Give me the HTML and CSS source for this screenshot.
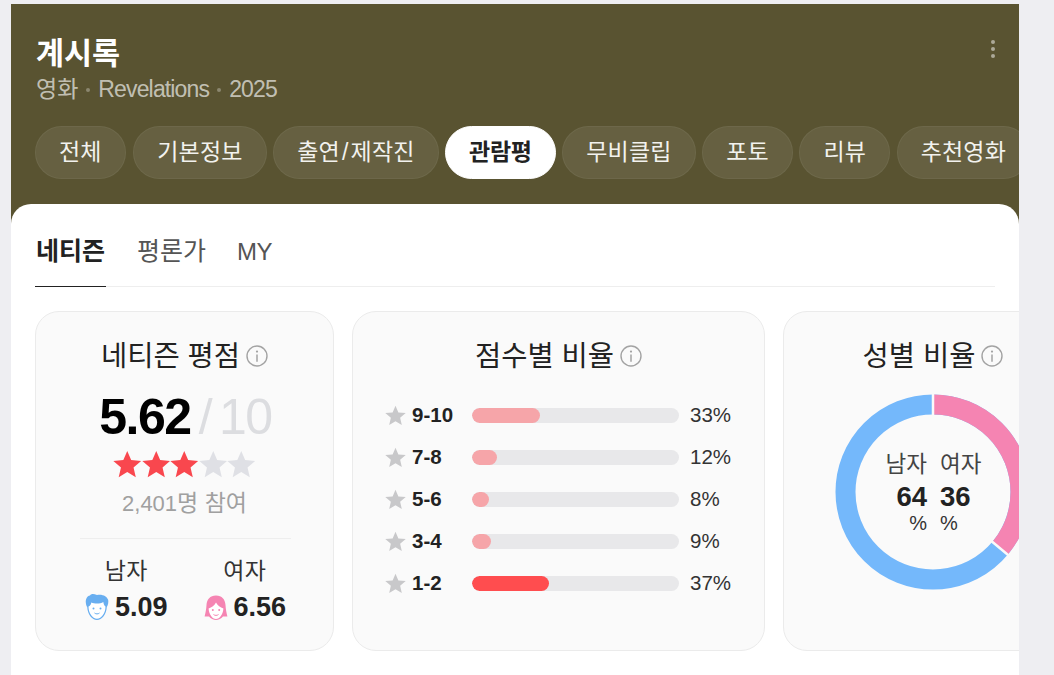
FILE: index.html
```html
<!DOCTYPE html>
<html lang="ko">
<head>
    <meta charset="UTF-8">
    <meta name="viewport" content="width=device-width, initial-scale=1.0">
    <title>계시록 관람평</title>
    <link rel="stylesheet" href="styles.css">
</head>
<body>
    <div class="panel">
        <header class="head">
            <div class="head-top">
                <div>
                    <h1 class="movie-title">계시록</h1>
                    <p class="movie-sub"><span class="ko">영화</span><i class="dot"></i>Revelations<i class="dot"></i>2025</p>
                </div>
                <div class="more"><i></i><i></i><i></i></div>
            </div>
            <nav class="tabs">
                <a class="tab">전체</a>
                <a class="tab">기본정보</a>
                <a class="tab">출연<span class="slash">/</span>제작진</a>
                <a class="tab tab-on">관람평</a>
                <a class="tab">무비클립</a>
                <a class="tab">포토</a>
                <a class="tab">리뷰</a>
                <a class="tab">추천영화</a>
            </nav>
        </header>

        <main class="sheet">
            <div class="subtabs">
                <a class="subtab subtab-on">네티즌</a>
                <a class="subtab">평론가</a>
                <a class="subtab subtab-en">MY</a>
            </div>

            <div class="cards">
                <section class="card card-score">
                    <h2 class="card-title">네티즌 평점
                        <svg class="info" viewBox="0 0 22 22"><circle cx="11" cy="11" r="10" fill="none" stroke="#a3a3a3" stroke-width="1.4"/><circle cx="11" cy="6.6" r="1.1" fill="#a3a3a3"/><path d="M11 9.6v7.2" stroke="#a3a3a3" stroke-width="1.5"/></svg>
                    </h2>
                    <div class="score"><b>5.62</b><span>/</span><span>10</span></div>
                    <div class="stars">
                        <svg class="star star-on" viewBox="0 0 24 24"><path d="M12 .8l3.3 7.7 8.4.7-6.4 5.5 1.9 8.2L12 18.6l-7.2 4.3 1.9-8.2L.3 9.2l8.4-.7z"/></svg>
                        <svg class="star star-on" viewBox="0 0 24 24"><path d="M12 .8l3.3 7.7 8.4.7-6.4 5.5 1.9 8.2L12 18.6l-7.2 4.3 1.9-8.2L.3 9.2l8.4-.7z"/></svg>
                        <svg class="star star-on" viewBox="0 0 24 24"><path d="M12 .8l3.3 7.7 8.4.7-6.4 5.5 1.9 8.2L12 18.6l-7.2 4.3 1.9-8.2L.3 9.2l8.4-.7z"/></svg>
                        <svg class="star" viewBox="0 0 24 24"><path d="M12 .8l3.3 7.7 8.4.7-6.4 5.5 1.9 8.2L12 18.6l-7.2 4.3 1.9-8.2L.3 9.2l8.4-.7z"/></svg>
                        <svg class="star" viewBox="0 0 24 24"><path d="M12 .8l3.3 7.7 8.4.7-6.4 5.5 1.9 8.2L12 18.6l-7.2 4.3 1.9-8.2L.3 9.2l8.4-.7z"/></svg>
                    </div>
                    <p class="count">2,401<span class="ko">명 참여</span></p>
                    <div class="genders">
                        <div class="gender">
                            <span class="gender-name">남자</span>
                            <div class="gender-val">
                                <svg class="face" viewBox="0 0 24 28"><path d="M12 2C8 .5 6 1 5 2.500 2 3 .6 6 .8 9.500 1 11.500 1.500 13 2.200 14 2.500 21 7 27 12 27s9.500-6 9.800-13c1.200-2 1.800-4.500 1.400-7-1-3.500-5.500-6-11.200-5z" fill="#68aef0"/><path d="M3.500 13.500c1.500-.5 2.500-2 2.800-4 3.500 1.500 9 1.500 12-.5.300 2 1 3.500 2.200 4.500C20.500 20 16.500 25.800 12 25.800S3.500 20 3.500 13.500z" fill="#fff"/><circle cx="8.500" cy="15.500" r="1" fill="#68aef0"/><circle cx="15.500" cy="15.500" r="1" fill="#68aef0"/><path d="M9.500 20c1.500 1.200 3.500 1.200 5 0" fill="none" stroke="#68aef0" stroke-width="1"/></svg>
                                <b>5.09</b>
                            </div>
                        </div>
                        <div class="gender">
                            <span class="gender-name">여자</span>
                            <div class="gender-val">
                                <svg class="face" viewBox="0 0 24 28"><path d="M12 2.500C6 2.500 2.800 6.500 2.500 12 2.300 16 1.500 20 .6 23.500H5c1.800 2 4.500 3.500 7 3.500s5.200-1.500 7-3.500h4.400c-.9-3.500-1.700-7.500-1.900-11.500C21.200 6.500 18 2.500 12 2.500z" fill="#f584b2"/><path d="M4.600 15.500c3-1 6-3 7.400-6 1.400 3 4.400 5 7.400 6-.3 5.500-3.600 10.500-7.400 10.500S4.900 21 4.600 15.500z" fill="#fff"/><circle cx="8.800" cy="17" r="1" fill="#f584b2"/><circle cx="15.200" cy="17" r="1" fill="#f584b2"/><path d="M9.500 21.500c1.500 1.200 3.500 1.200 5 0" fill="none" stroke="#f584b2" stroke-width="1"/></svg>
                                <b>6.56</b>
                            </div>
                        </div>
                    </div>
                </section>

                <section class="card card-dist">
                    <h2 class="card-title">점수별 비율
                        <svg class="info" viewBox="0 0 22 22"><circle cx="11" cy="11" r="10" fill="none" stroke="#a3a3a3" stroke-width="1.4"/><circle cx="11" cy="6.6" r="1.1" fill="#a3a3a3"/><path d="M11 9.600v7.200" stroke="#a3a3a3" stroke-width="1.5"/></svg>
                    </h2>
                    <ul class="rows">
                        <li class="row">
                            <svg class="row-star" viewBox="0 0 24 24"><path d="M12 .8l3.300 7.700 8.400.7-6.400 5.500 1.900 8.200L12 18.600l-7.200 4.300 1.900-8.200L.3 9.200l8.400-.7z"/></svg>
                            <b class="row-label">9-10</b>
                            <div class="track"><div class="fill" style="width: 33%"></div></div>
                            <span class="pct">33%</span>
                        </li>
                        <li class="row">
                            <svg class="row-star" viewBox="0 0 24 24"><path d="M12 .8l3.300 7.700 8.400.7-6.400 5.500 1.900 8.200L12 18.600l-7.200 4.300 1.900-8.200L.3 9.200l8.400-.7z"/></svg>
                            <b class="row-label">7-8</b>
                            <div class="track"><div class="fill" style="width: 12%"></div></div>
                            <span class="pct">12%</span>
                        </li>
                        <li class="row">
                            <svg class="row-star" viewBox="0 0 24 24"><path d="M12 .8l3.300 7.700 8.400.7-6.400 5.500 1.900 8.200L12 18.600l-7.200 4.300 1.900-8.200L.3 9.200l8.400-.7z"/></svg>
                            <b class="row-label">5-6</b>
                            <div class="track"><div class="fill" style="width: 8%"></div></div>
                            <span class="pct">8%</span>
                        </li>
                        <li class="row">
                            <svg class="row-star" viewBox="0 0 24 24"><path d="M12 .8l3.300 7.700 8.400.7-6.400 5.500 1.900 8.200L12 18.600l-7.200 4.300 1.900-8.200L.3 9.200l8.400-.7z"/></svg>
                            <b class="row-label">3-4</b>
                            <div class="track"><div class="fill" style="width: 9%"></div></div>
                            <span class="pct">9%</span>
                        </li>
                        <li class="row">
                            <svg class="row-star" viewBox="0 0 24 24"><path d="M12 .8l3.300 7.700 8.400.7-6.400 5.500 1.900 8.200L12 18.600l-7.200 4.300 1.900-8.200L.3 9.200l8.400-.7z"/></svg>
                            <b class="row-label">1-2</b>
                            <div class="track"><div class="fill fill-max" style="width: 37%"></div></div>
                            <span class="pct">37%</span>
                        </li>
                    </ul>
                </section>

                <section class="card card-gender">
                    <h2 class="card-title">성별 비율
                        <svg class="info" viewBox="0 0 22 22"><circle cx="11" cy="11" r="10" fill="none" stroke="#a3a3a3" stroke-width="1.4"/><circle cx="11" cy="6.6" r="1.1" fill="#a3a3a3"/><path d="M11 9.600v7.200" stroke="#a3a3a3" stroke-width="1.5"/></svg>
                    </h2>
                    <div class="donut">
                        <svg viewBox="0 0 196 196" width="196" height="196">
                            <circle cx="98" cy="98" r="87.500" fill="none" stroke="#74b8fb" stroke-width="20"/>
                            <circle cx="98" cy="98" r="87.500" fill="none" stroke="#f584b2" stroke-width="20" pathLength="100" stroke-dasharray="36 64" transform="rotate(-90 98 98)"/>
                            <path d="M98 0v21M174 161.800l-18-15.100" stroke="#fafafa" stroke-width="2.500"/>
                        </svg>
                        <div class="donut-text">
                            <div class="donut-col donut-left"><span>남자</span><b>64</b><em>%</em></div>
                            <div class="donut-col donut-right"><span>여자</span><b>36</b><em>%</em></div>
                        </div>
                    </div>
                </section>
            </div>
        </main>
    </div>
</body>
</html>
```

FILE: styles.css
```css
* {
    box-sizing: border-box;
}

html, body {
    height: 100%;
}

body {
    margin: 0;
    padding: 4px 35px 0 11px;
    overflow: hidden;
    background-color: #eeeef2;
    font-family: "Liberation Sans", "Noto Sans CJK KR", sans-serif;
    color: #222;
}

.panel {
    height: 100%;
    background-color: #595331;
    overflow: hidden;
}

.head {
    height: 200px;
    padding: 32px 0 0 24px;
}

.head-top {
    display: flex;
    justify-content: space-between;
    height: 90px;
    padding-left: 1px;
    padding-right: 24px;
}

.movie-title {
    margin: 1px 0 0;
    font-size: 30.500px;
    line-height: 32px;
    font-weight: 700;
    color: #fff;
}

.movie-sub {
    display: flex;
    align-items: center;
    margin: 5px 0 0;
    font-size: 23px;
    line-height: 30px;
    letter-spacing: -0.85px;
    color: rgba(255, 255, 255, 0.65);
}

.ko {
    letter-spacing: 0;
}

.dot {
    width: 4px;
    height: 4px;
    margin: 2px 8px 0;
    border-radius: 50%;
    background-color: rgba(255, 255, 255, 0.3);
}

.more {
    display: flex;
    flex-direction: column;
    gap: 3px;
    padding-top: 4px;
}

.more i {
    width: 4px;
    height: 4px;
    border-radius: 50%;
    background-color: rgba(255, 255, 255, 0.5);
}

.tabs {
    display: flex;
    gap: 6.500px;
}

.tab {
    flex: none;
    height: 53px;
    padding: 0 23px;
    border: 1px solid rgba(255, 255, 255, 0.05);
    border-radius: 27px;
    background-color: rgba(255, 255, 255, 0.08);
    font-size: 23px;
    line-height: 50px;
    letter-spacing: 0.2px;
    color: #f2f2ee;
}

.tab:first-child {
    margin-right: 1px;
}

.slash {
    margin: 0 2px;
}

.tab-on {
    background-color: #fff;
    border-color: #fff;
    font-weight: 700;
    letter-spacing: -0.3px;
    color: #222;
}

.sheet {
    height: 480px;
    padding: 0 24px;
    background-color: #fff;
    border-radius: 20px 20px 0 0;
    overflow: hidden;
}

.subtabs {
    display: flex;
    gap: 30px;
    height: 83px;
    border-bottom: 1px solid #eeeeee;
}

.subtab {
    height: 83px;
    padding: 0 1px;
    font-size: 25px;
    line-height: 95px;
    color: #555;
}

.subtab-on {
    border-bottom: 1px solid #222;
    font-weight: 700;
    color: #222;
}

.subtab-en {
    margin-left: -1px;
    font-size: 24px;
    letter-spacing: -0.6px;
}

.cards {
    display: flex;
    gap: 18px;
    margin-top: 24px;
    margin-right: -24px;
}

.card {
    flex: none;
    height: 340px;
    border: 1px solid #ebebeb;
    border-radius: 24px;
    background-color: #fafafa;
    text-align: center;
}

.card-score {
    width: 299px;
}

.card-dist {
    width: 413px;
}

.card-gender {
    width: 300px;
}

.card-title {
    display: flex;
    justify-content: center;
    align-items: center;
    gap: 6px;
    margin: 25px 0 0;
    font-size: 28.500px;
    line-height: 38px;
    font-weight: 400;
    color: #222;
}

.info {
    width: 22px;
    height: 22px;
}

.score {
    display: flex;
    justify-content: center;
    align-items: baseline;
    gap: 8px;
    margin-top: 14px;
    padding-left: 2px;
    font-size: 50px;
    line-height: 56px;
    letter-spacing: -1.500px;
    color: #dcdde0;
}

.score b {
    color: #000;
}

.stars {
    display: flex;
    justify-content: center;
    margin-top: 5px;
    height: 30px;
}

.star {
    width: 28.500px;
    height: 28.500px;
    fill: #dfe0e5;
}

.star-on {
    fill: #f9474e;
}

.count {
    margin: 8px 0 0;
    font-size: 22px;
    line-height: 30px;
    color: #a0a0a0;
}

.count .ko {
    font-size: 23px;
}

.genders {
    display: flex;
    justify-content: center;
    gap: 36px;
    margin: 19px 42px 0 44px;
    padding-top: 16px;
    border-top: 1px solid #eeeeee;
}

.gender {
    display: flex;
    flex-direction: column;
    align-items: center;
    gap: 5px;
}

.gender-name {
    font-size: 23px;
    line-height: 32px;
    letter-spacing: 0.3px;
    color: #333;
}

.gender-val {
    display: flex;
    align-items: center;
    gap: 6px;
    font-size: 27px;
    line-height: 30px;
    color: #222;
}

.face {
    width: 24px;
    height: 28px;
}

.rows {
    list-style: none;
    margin: 19px 0 0;
    padding: 0 0 0 32px;
}

.row {
    display: flex;
    align-items: center;
    height: 42px;
}

.row-star {
    width: 21px;
    height: 21px;
    fill: #c8c8ca;
}

.row-label {
    width: 60px;
    margin-left: 6px;
    font-size: 20.500px;
    text-align: left;
    color: #222;
}

.track {
    width: 207px;
    height: 15px;
    border-radius: 8px;
    background-color: #e8e8ea;
    overflow: hidden;
}

.fill {
    height: 100%;
    min-width: 16px;
    border-radius: 8px;
    background-color: #f6a5a9;
}

.fill-max {
    background-color: #ff4d4f;
}

.pct {
    margin-left: 11px;
    font-size: 20.500px;
    color: #333;
}

.donut {
    position: relative;
    width: 196px;
    height: 196px;
    margin: 19px 0 0 51px;
}

.donut svg {
    display: block;
}

.donut-text {
    position: absolute;
    top: 56px;
    left: 51px;
    display: flex;
    gap: 13px;
}

.donut-col {
    display: flex;
    flex-direction: column;
    width: 41px;
}

.donut-left {
    align-items: flex-end;
}

.donut-right {
    align-items: flex-start;
}

.donut-col span {
    font-size: 22.500px;
    line-height: 30px;
    white-space: nowrap;
    color: #444;
}

.donut-col b {
    margin-top: 1px;
    font-size: 27.500px;
    line-height: 31px;
    color: #222;
}

.donut-col em {
    font-style: normal;
    font-size: 20px;
    line-height: 22px;
    color: #333;
}
```
